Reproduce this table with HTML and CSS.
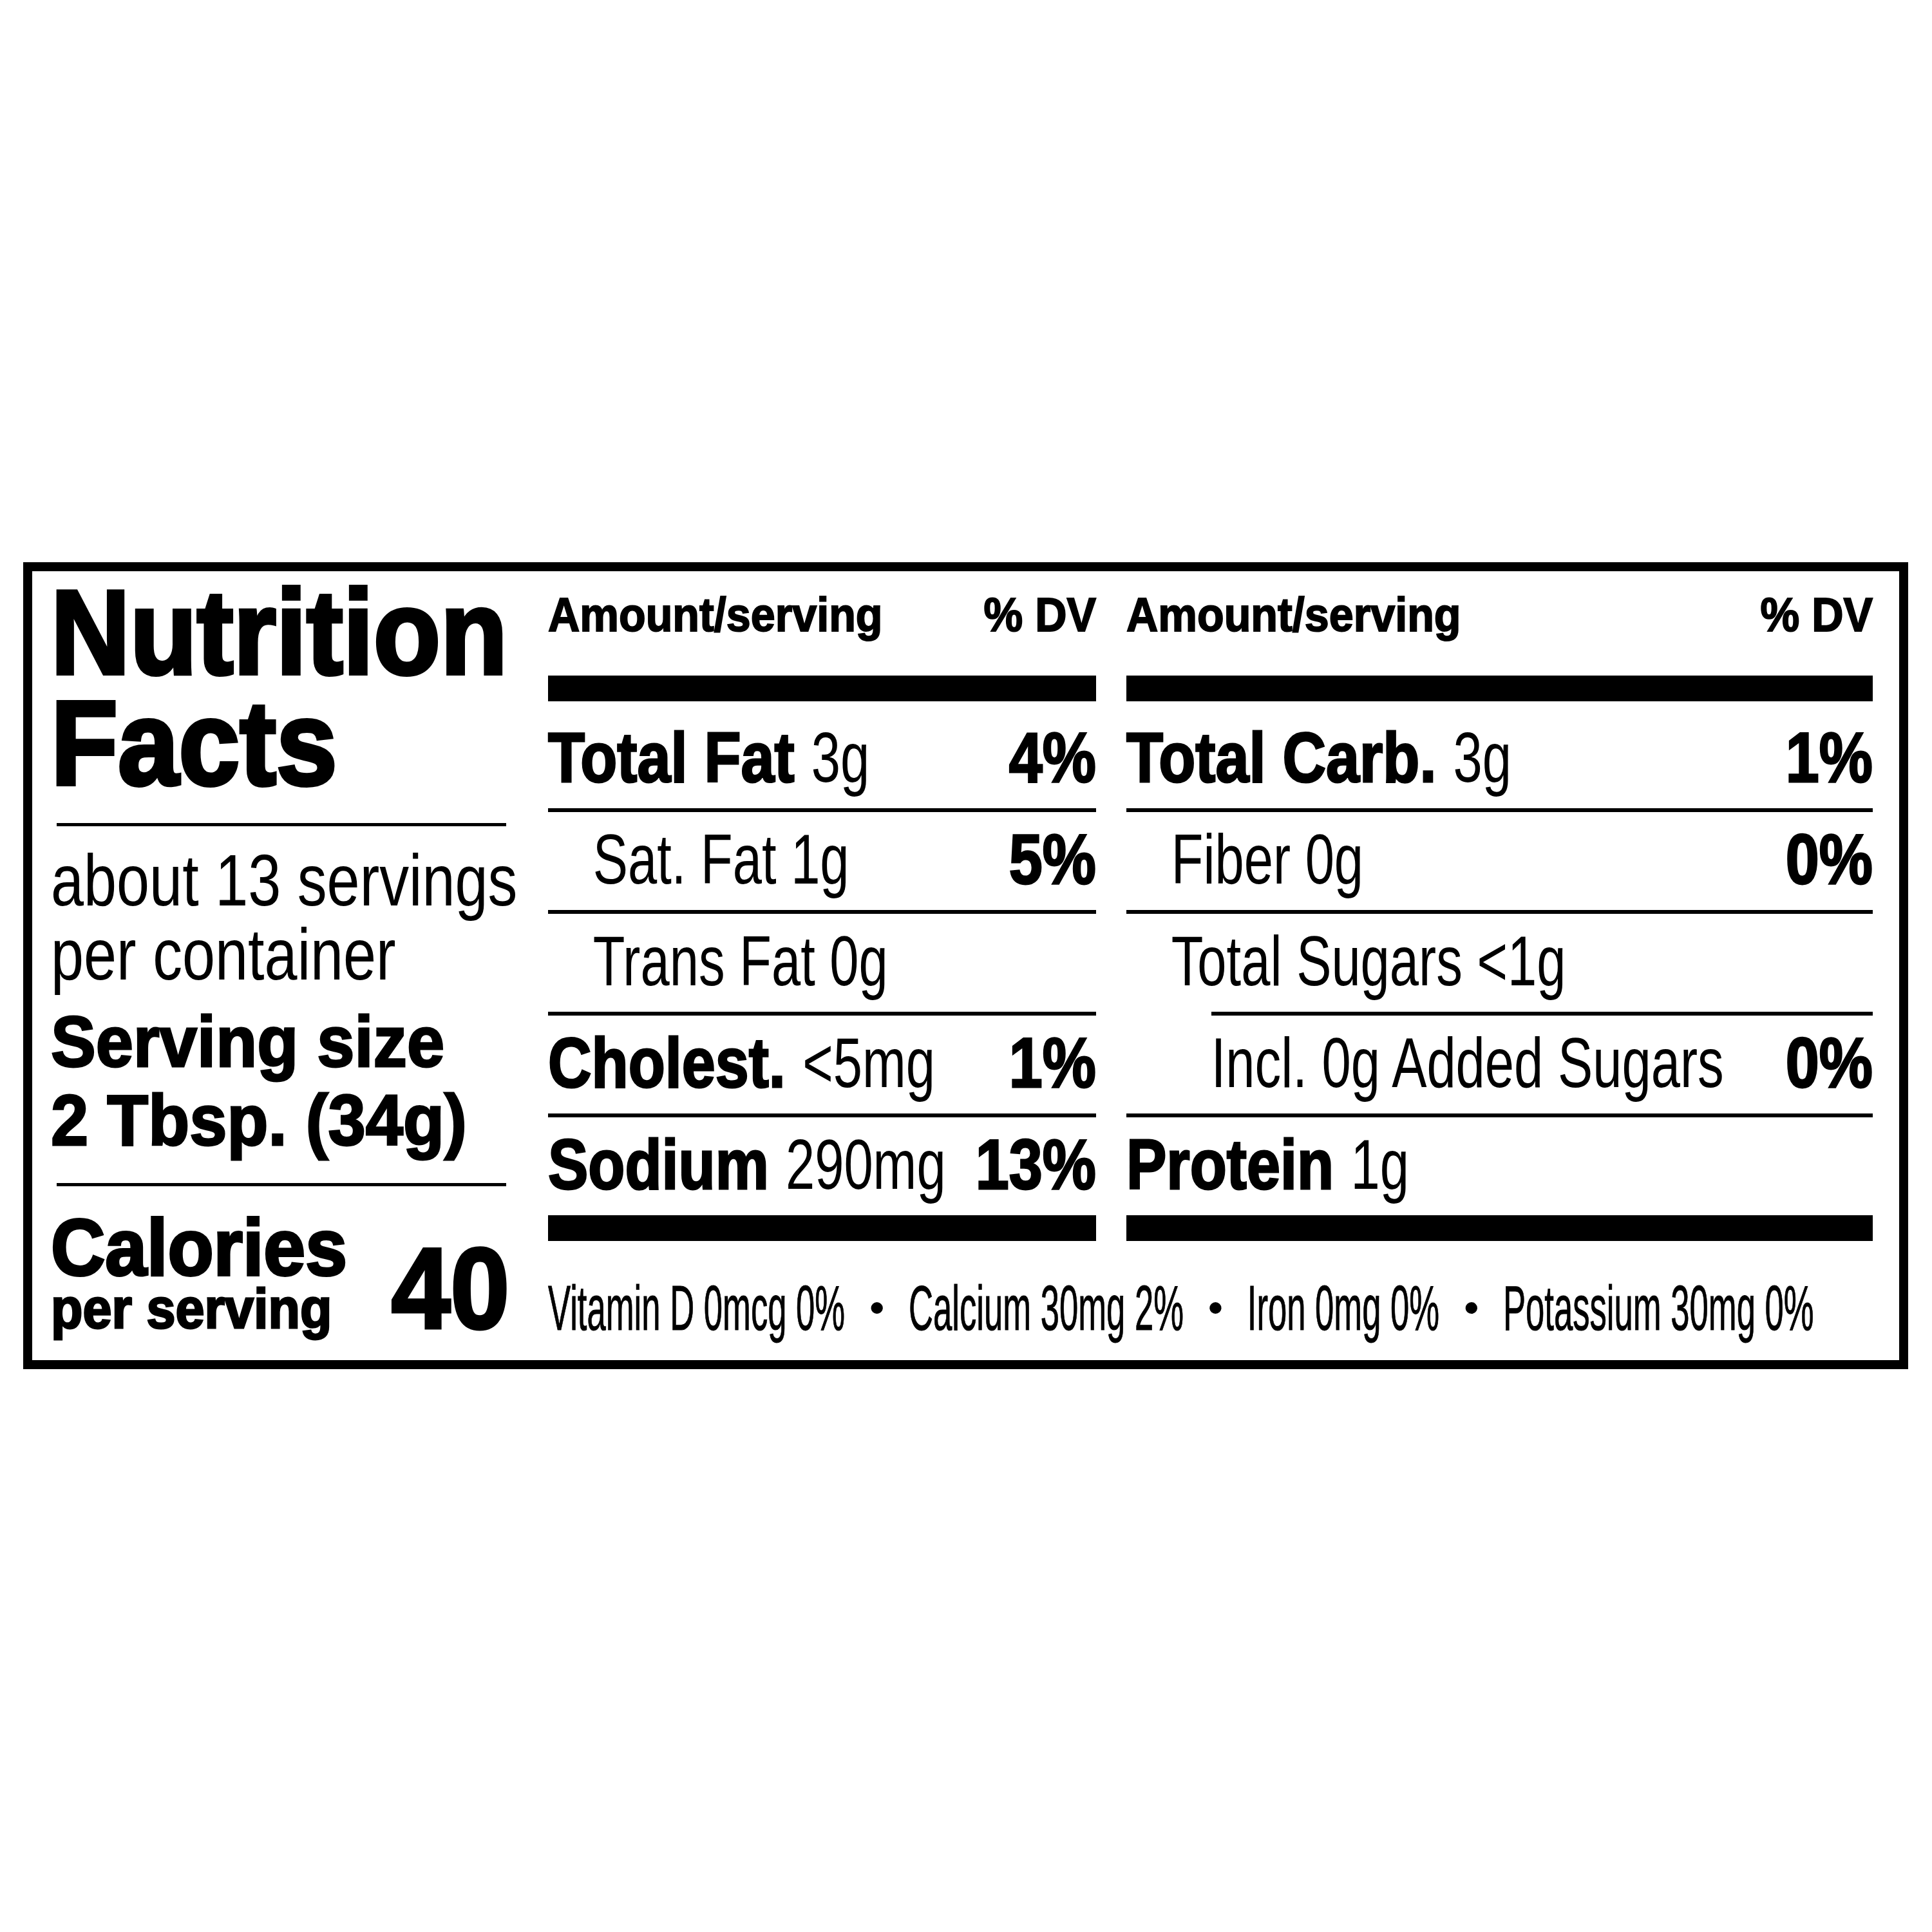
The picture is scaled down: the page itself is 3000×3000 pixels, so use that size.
FILE: index.html
```html
<!DOCTYPE html>
<html>
<head>
<meta charset="utf-8">
<link rel="stylesheet" href="styles.css">
</head>
<body>
<div class="label">
  <div class="left">
    <h1 class="title">Nutrition<br>Facts</h1>
    <div class="hr hr-title"></div>
    <div class="servings">about 13 servings<br>per container</div>
    <div class="size">Serving size<br>2 Tbsp. (34g)</div>
    <div class="hr hr-size"></div>
    <div class="cal">
      <div class="cal-label">
        <div class="cal-big">Calories</div>
        <div class="cal-small">per serving</div>
      </div>
      <div class="cal-num">40</div>
    </div>
  </div>

  <div class="table">
    <div class="head"><span>Amount/serving</span><span>% DV</span></div>
    <div class="bar"></div>
    <div class="row first"><span class="nm"><b>Total Fat</b> <span class="amt">3g</span></span><b class="pct">4%</b></div>
    <div class="rule"></div>
    <div class="row sub"><span class="nm"><span class="amt">Sat. Fat 1g</span></span><b class="pct">5%</b></div>
    <div class="rule"></div>
    <div class="row sub"><span class="nm"><span class="amt">Trans Fat 0g</span></span></div>
    <div class="rule"></div>
    <div class="row"><span class="nm"><b>Cholest.</b> <span class="amt">&lt;5mg</span></span><b class="pct">1%</b></div>
    <div class="rule"></div>
    <div class="row"><span class="nm"><b>Sodium</b> <span class="amt">290mg</span></span><b class="pct">13%</b></div>
    <div class="bar"></div>
  </div>

  <div class="table">
    <div class="head"><span>Amount/serving</span><span>% DV</span></div>
    <div class="bar"></div>
    <div class="row first"><span class="nm"><b>Total Carb.</b> <span class="amt">3g</span></span><b class="pct">1%</b></div>
    <div class="rule"></div>
    <div class="row sub"><span class="nm"><span class="amt">Fiber 0g</span></span><b class="pct">0%</b></div>
    <div class="rule"></div>
    <div class="row sub"><span class="nm"><span class="amt">Total Sugars &lt;1g</span></span></div>
    <div class="rule indent"></div>
    <div class="row sub2"><span class="nm"><span class="amt">Incl. 0g Added Sugars</span></span><b class="pct">0%</b></div>
    <div class="rule"></div>
    <div class="row"><span class="nm"><b>Protein</b> <span class="amt">1g</span></span></div>
    <div class="bar"></div>
  </div>

  <div class="vit-cell">
    <div class="vit">Vitamin D 0mcg 0%<span class="dot"></span>Calcium 30mg 2%<span class="dot"></span>Iron 0mg 0%<span class="dot"></span>Potassium 30mg 0%</div>
  </div>
</div>
</body>
</html>
```
FILE: styles.css
```css
body {
  margin: 0;
  padding: 873px 0 0 36px;
  background: #fff;
  color: #000;
  font-family: "Liberation Sans", Arial, sans-serif;
}

.label {
  box-sizing: border-box;
  width: 2927px;
  height: 1253px;
  border: 14px solid #000;
  padding: 0 40px 0 38px;
  display: grid;
  grid-template-columns: 716px 851px 1159px;
  grid-template-rows: auto 1fr;
  column-gap: 47px;
  overflow: hidden;
}

/* ---------- left column ---------- */
.left {
  grid-row: 1 / span 2;
  padding: 9px 18px 0 0;
  min-width: 0;
}

.title,
.servings,
.size,
.cal {
  margin-left: -9px;
}

.title {
  margin-top: 0;
  margin-bottom: 0;
  font-weight: 700;
  font-size: 186px;
  line-height: 172px;
  -webkit-text-stroke: 6px #000;
  white-space: nowrap;
  transform: scaleX(0.915);
  transform-origin: left center;
}

.hr {
  height: 5px;
  background: #000;
}

.hr-title {
  margin-top: 38px;
}

.servings {
  margin-top: 26px;
  font-size: 114px;
  line-height: 115px;
  white-space: nowrap;
  transform: scaleX(0.805);
  transform-origin: left center;
}

.size {
  margin-top: 18px;
  font-size: 112px;
  line-height: 122px;
  font-weight: 700;
  -webkit-text-stroke: 3px #000;
  white-space: nowrap;
  transform: scaleX(0.935);
  transform-origin: left center;
}

.hr-size {
  margin-top: 36px;
}

.cal {
  display: flex;
  justify-content: space-between;
  align-items: last baseline;
  margin-top: 37px;
  margin-right: -5px;
}

.cal-big {
  font-size: 124px;
  line-height: 116px;
  font-weight: 700;
  -webkit-text-stroke: 4px #000;
  transform: scaleX(0.94);
  transform-origin: left center;
}

.cal-small {
  font-size: 88px;
  line-height: 74px;
  font-weight: 700;
  -webkit-text-stroke: 3px #000;
  white-space: nowrap;
  transform: scaleX(0.92);
  transform-origin: left center;
}

.cal-num {
  font-size: 178px;
  line-height: 178px;
  font-weight: 700;
  -webkit-text-stroke: 5px #000;
  transform: scaleX(0.925);
  transform-origin: right center;
}

/* ---------- tables ---------- */
.table {
  display: flex;
  flex-direction: column;
  align-items: flex-start;
}

.bar,
.rule {
  align-self: stretch;
  background: #000;
}

.bar {
  height: 40px;
}

.rule {
  height: 6px;
}

.rule.indent {
  margin-left: 132px;
}

.head {
  box-sizing: border-box;
  width: calc(100% / 0.91);
  height: 162px;
  display: flex;
  justify-content: space-between;
  font-weight: 700;
  font-size: 75px;
  line-height: 134px;
  -webkit-text-stroke: 2px #000;
  white-space: nowrap;
  transform: scaleX(0.91);
  transform-origin: left center;
}

.row {
  box-sizing: border-box;
  width: calc(100% / 0.85);
  height: 152px;
  display: flex;
  justify-content: space-between;
  font-size: 110px;
  line-height: 146px;
  white-space: nowrap;
  transform: scaleX(0.85);
  transform-origin: left center;
}

.row.first {
  height: 166px;
  padding-top: 14px;
}

.row.sub {
  padding-left: 82px;
}

.row.sub2 {
  padding-left: 155px;
}

.row b {
  font-weight: 700;
  -webkit-text-stroke: 3px #000;
}

.nm {
  flex: 1 1 0;
  min-width: 0;
}

.amt {
  display: inline-block;
  transform: scaleX(0.87);
  transform-origin: left center;
}

.pct {
  flex: none;
}

/* ---------- vitamins ---------- */
.vit-cell {
  grid-column: 2 / span 2;
  min-width: 0;
}

.vit {
  width: calc(100% / 0.537);
  margin-top: 55px;
  font-size: 98px;
  line-height: 98px;
  white-space: nowrap;
  -webkit-text-stroke: 1px #000;
  transform: scaleX(0.537);
  transform-origin: left center;
}

.dot {
  display: inline-block;
  width: 34px;
  height: 18px;
  border-radius: 50%;
  background: #000;
  margin: 0 75px;
  vertical-align: 25px;
}
```
